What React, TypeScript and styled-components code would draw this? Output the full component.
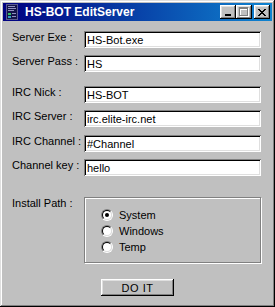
import React from 'react';
import styled, { createGlobalStyle } from 'styled-components';

const FACE = '#c0c0c0';
const SHADOW = '#808080';
const LIGHT = '#dfdfdf';
const UI_FONT = '"Liberation Sans", Arial, sans-serif';

const GlobalStyle = createGlobalStyle`
  html, body {
    margin: 0;
    padding: 0;
    background: ${FACE};
  }
  * {
    box-sizing: border-box;
  }
`;

interface Field {
  label: string;
  value: string;
  spaced?: boolean;
}

const fields: Field[] = [
  { label: 'Server Exe :', value: 'HS-Bot.exe' },
  { label: 'Server Pass :', value: 'HS' },
  { label: 'IRC Nick :', value: 'HS-BOT', spaced: true },
  { label: 'IRC Server :', value: 'irc.elite-irc.net' },
  { label: 'IRC Channel :', value: '#Channel' },
  { label: 'Channel key :', value: 'hello' },
];

const paths = ['System', 'Windows', 'Temp'];

const AppIcon = () => (
  <svg width="16" height="16" viewBox="0 0 16 16">
    <rect x="2" y="0" width="12" height="16" fill="#14144a" />
    <rect x="2.5" y="0.5" width="11" height="15" fill="none" stroke="#5a5a90" strokeWidth="1" />
    <rect x="4" y="2" width="7" height="1" fill="#9090c0" />
    <rect x="4" y="4" width="8" height="1" fill="#9090c0" />
    <rect x="4" y="6" width="6" height="1" fill="#9090c0" />
    <rect x="4" y="9" width="3" height="2" fill="#30c060" />
    <rect x="4" y="12" width="3" height="2" fill="#30a0c0" />
    <rect x="8" y="9" width="4" height="1" fill="#9090c0" />
    <rect x="8" y="12" width="4" height="1" fill="#9090c0" />
  </svg>
);

const MinGlyph = () => (
  <svg width="8" height="8" viewBox="0 0 8 8">
    <rect x="1" y="6" width="6" height="2" fill="#000" />
  </svg>
);

const MaxGlyph = () => (
  <svg width="10" height="10" viewBox="0 0 10 10">
    <g transform="translate(1 1)">
      <rect x="0.5" y="0.5" width="8" height="8" fill="none" stroke="#fff" />
      <rect x="0" y="1" width="9" height="1" fill="#fff" />
    </g>
    <rect x="0.5" y="0.5" width="8" height="8" fill="none" stroke={SHADOW} />
    <rect x="0" y="1" width="9" height="1" fill={SHADOW} />
  </svg>
);

const CloseGlyph = () => (
  <svg width="8" height="7" viewBox="0 0 8 7">
    <path
      d="M0 0h2v1h1v1h2v-1h1v-1h2v1h-1v1h-1v1h-1v1h1v1h1v1h1v1h-2v-1h-1v-1h-2v1h-1v1h-2v-1h1v-1h1v-1h1v-1h-1v-1h-1v-1h-1z"
      fill="#000"
    />
  </svg>
);

const App: React.FC = () => {
  return (
    <>
      <GlobalStyle />
      <Window>
        <TitleBar>
          <AppIcon />
          <Title>HS-BOT EditServer</Title>
          <Controls>
            <CaptionButton>
              <MinGlyph />
            </CaptionButton>
            <CaptionButton>
              <MaxGlyph />
            </CaptionButton>
            <CaptionButton $gap>
              <CloseGlyph />
            </CaptionButton>
          </Controls>
        </TitleBar>

        <Form>
          {fields.map((f) => (
            <Row key={f.label} $spaced={f.spaced}>
              <Label>{f.label}</Label>
              <TextBox defaultValue={f.value} spellCheck={false} />
            </Row>
          ))}

          <PathRow>
            <Label>Install Path :</Label>
            <GroupBox>
              {paths.map((p, i) => (
                <RadioRow key={p}>
                  <RadioOuter>
                    <RadioInner>{i === 0 && <RadioDot />}</RadioInner>
                  </RadioOuter>
                  <RadioText>{p}</RadioText>
                </RadioRow>
              ))}
            </GroupBox>
          </PathRow>

          <Footer>
            <PushButton>DO IT</PushButton>
          </Footer>
        </Form>
      </Window>
    </>
  );
};

export default App;

const Window = styled('div')`
  width: 275px;
  height: 307px;
  background: ${FACE};
  padding: 3px;
  display: flex;
  flex-direction: column;
  font-family: ${UI_FONT};
  box-shadow:
    inset -1px -1px #000,
    inset 1px 1px ${LIGHT},
    inset -2px -2px ${SHADOW},
    inset 2px 2px #fff;
`;

const TitleBar = styled('div')`
  height: 18px;
  display: flex;
  align-items: center;
  padding: 0 2px 0 1px;
  gap: 4px;
  background: linear-gradient(to right, #000080, #1084d0);
`;

const Title = styled('div')`
  flex: 1;
  color: #fff;
  font-weight: 700;
  font-size: 12px;
  line-height: 14px;
  padding-left: 1px;
  white-space: nowrap;
`;

const Controls = styled('div')`
  display: flex;
  align-items: center;
`;

const CaptionButton = styled('div')<{ $gap?: boolean }>`
  width: 16px;
  height: 14px;
  margin-left: ${({ $gap }) => ($gap ? '2px' : '0')};
  background: ${FACE};
  display: flex;
  align-items: center;
  justify-content: center;
  box-shadow:
    inset -1px -1px #000,
    inset 1px 1px #fff,
    inset -2px -2px ${SHADOW},
    inset 2px 2px ${LIGHT};
`;

const Form = styled('div')`
  flex: 1;
  display: flex;
  flex-direction: column;
  padding: 10px 11px 0 9px;
`;

const Row = styled('div')<{ $spaced?: boolean }>`
  display: flex;
  align-items: flex-start;
  height: 17px;
  margin-bottom: 7px;
  margin-top: ${({ $spaced }) => ($spaced ? '6px' : '0')};

  &:nth-child(2),
  &:nth-child(4) {
    margin-bottom: 8px;
  }
`;

const Label = styled('div')`
  width: 72px;
  font-size: 11px;
  line-height: 13px;
  color: #000;
  white-space: nowrap;
`;

const TextBox = styled('input')`
  flex: 1;
  height: 17px;
  border: none;
  outline: none;
  margin: 0;
  padding: 1px 2px 0 3px;
  background: #fff;
  color: #000;
  font-family: ${UI_FONT};
  font-size: 11px;
  box-shadow:
    inset 1px 1px ${SHADOW},
    inset -1px -1px #fff,
    inset 2px 2px #000,
    inset -2px -2px ${LIGHT};
`;

const PathRow = styled('div')`
  display: flex;
  align-items: flex-start;
  margin-top: 14px;
`;

const GroupBox = styled('div')`
  flex: 1;
  height: 66px;
  border: 1px solid ${SHADOW};
  box-shadow:
    inset 1px 1px #fff,
    1px 1px #fff;
  padding: 9px 0 0 16px;
  display: flex;
  flex-direction: column;
`;

const RadioRow = styled('div')`
  height: 16px;
  display: flex;
  align-items: center;
  gap: 6px;
`;

const RadioOuter = styled('span')`
  width: 12px;
  height: 12px;
  border-radius: 50%;
  border: 1px solid;
  border-color: ${SHADOW} #fff #fff ${SHADOW};
  display: flex;
`;

const RadioInner = styled('span')`
  flex: 1;
  border-radius: 50%;
  border: 1px solid;
  border-color: #000 ${LIGHT} ${LIGHT} #000;
  background: #fff;
  display: flex;
  align-items: center;
  justify-content: center;
`;

const RadioDot = styled('span')`
  width: 4px;
  height: 4px;
  border-radius: 50%;
  background: #000;
`;

const RadioText = styled('span')`
  font-size: 11px;
  line-height: 13px;
  color: #000;
`;

const Footer = styled('div')`
  display: flex;
  justify-content: center;
  margin-top: 16px;
  padding-left: 2px;
`;

const PushButton = styled('div')`
  width: 73px;
  height: 17px;
  background: ${FACE};
  display: flex;
  align-items: center;
  justify-content: center;
  font-size: 11px;
  color: #000;
  letter-spacing: 0.5px;
  box-shadow:
    inset -1px -1px #000,
    inset 1px 1px #fff,
    inset -2px -2px ${SHADOW},
    inset 2px 2px ${LIGHT};
`;
